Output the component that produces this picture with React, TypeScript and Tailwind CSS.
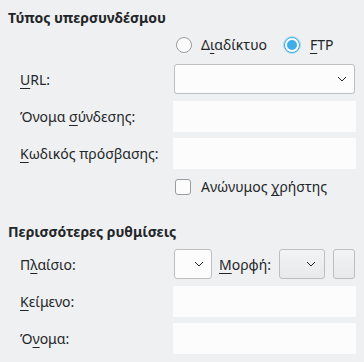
import React from "react";

const U = ({ children }: { children: React.ReactNode }) => (
  <span className="underline decoration-1 underline-offset-[3px]">{children}</span>
);

const Chevron = () => (
  <svg width="10" height="6" viewBox="0 0 10 6" className="block">
    <path d="M1 1 L5 5 L9 1" fill="none" stroke="#232629" strokeWidth="1" />
  </svg>
);

const Input = () => <div className="ml-0 w-[183px] h-full bg-[#fcfcfc]" />;

export default function App() {
  return (
    <div
      className="w-[364px] h-[362px] bg-[#eff0f1] text-[#232629] text-[14px] flex flex-col"
      style={{ fontFamily: '"Noto Sans", "Open Sans", sans-serif' }}
    >
      <div className="mt-[8px] h-[20px] leading-[20px] pl-[8px] font-bold">Τύπος υπερσυνδέσμου</div>

      <div className="mt-[9px] h-[16px] flex items-center pl-[176px]">
        <div className="w-[16px] h-[16px] rounded-full border border-[#9a9c9e] bg-[#fcfcfc]" />
        <span className="ml-[9px] leading-[16px]">
          Δ<U>ι</U>αδίκτυο
        </span>
        <div className="ml-[17px] w-[16px] h-[16px] rounded-full border border-[#3daee9] bg-[#fcfcfc] flex items-center justify-center shadow-[0_0_0_1px_rgba(61,174,233,0.35)]">
          <div className="w-[10px] h-[10px] rounded-full bg-[#3daee9]" />
        </div>
        <span className="ml-[10px] leading-[16px]">
          <U>F</U>TP
        </span>
      </div>

      <div className="mt-[11px] h-[30px] flex items-center">
        <div className="w-[174px] pl-[20px]">
          <U>U</U>RL:
        </div>
        <div className="w-[181px] h-full rounded-[3px] border border-[#bcbebf] bg-[#fcfcfc] flex items-center justify-end pr-[7px]">
          <Chevron />
        </div>
      </div>

      <div className="mt-[7px] h-[31px] flex items-center">
        <div className="w-[173px] pl-[20px]">
          Όνομα <U>σ</U>ύνδεσης:
        </div>
        <Input />
      </div>

      <div className="mt-[6px] h-[31px] flex items-center">
        <div className="w-[173px] pl-[20px]">
          <U>Κ</U>ωδικός πρόσβασης:
        </div>
        <Input />
      </div>

      <div className="mt-[10px] h-[16px] flex items-center pl-[175px]">
        <div className="w-[16px] h-[16px] rounded-[3px] border border-[#9a9c9e] bg-[#fcfcfc]" />
        <span className="ml-[10px] leading-[16px]">
          Ανώνυμος <U>χ</U>ρήστης
        </span>
      </div>

      <div className="mt-[27px] h-[20px] leading-[20px] pl-[8px] font-bold">Περισσότερες ρυθμίσεις</div>

      <div className="mt-[7px] h-[30px] flex items-center">
        <div className="w-[174px] pl-[20px]">
          Π<U>λ</U>αίσιο:
        </div>
        <div className="w-[38px] h-full rounded-[3px] border border-[#bcbebf] bg-[#fcfcfc] flex items-center justify-end pr-[7px]">
          <Chevron />
        </div>
        <span className="ml-[7px]">
          <U>Μ</U>ορφή:
        </span>
        <div className="ml-auto w-[46px] h-full rounded-[3px] border border-[#bcbebf] bg-gradient-to-b from-[#f2f3f4] to-[#e8e9ea] flex items-center justify-end pr-[8px]">
          <Chevron />
        </div>
        <div className="ml-[8px] mr-[9px] w-[22px] h-full rounded-[3px] border border-[#bcbebf] bg-gradient-to-b from-[#f2f3f4] to-[#e8e9ea]" />
      </div>

      <div className="mt-[7px] h-[31px] flex items-center">
        <div className="w-[173px] pl-[20px]">
          <U>Κ</U>είμενο:
        </div>
        <Input />
      </div>

      <div className="mt-[6px] h-[31px] flex items-center">
        <div className="w-[173px] pl-[20px]">
          Ό<U>ν</U>ομα:
        </div>
        <Input />
      </div>
    </div>
  );
}
